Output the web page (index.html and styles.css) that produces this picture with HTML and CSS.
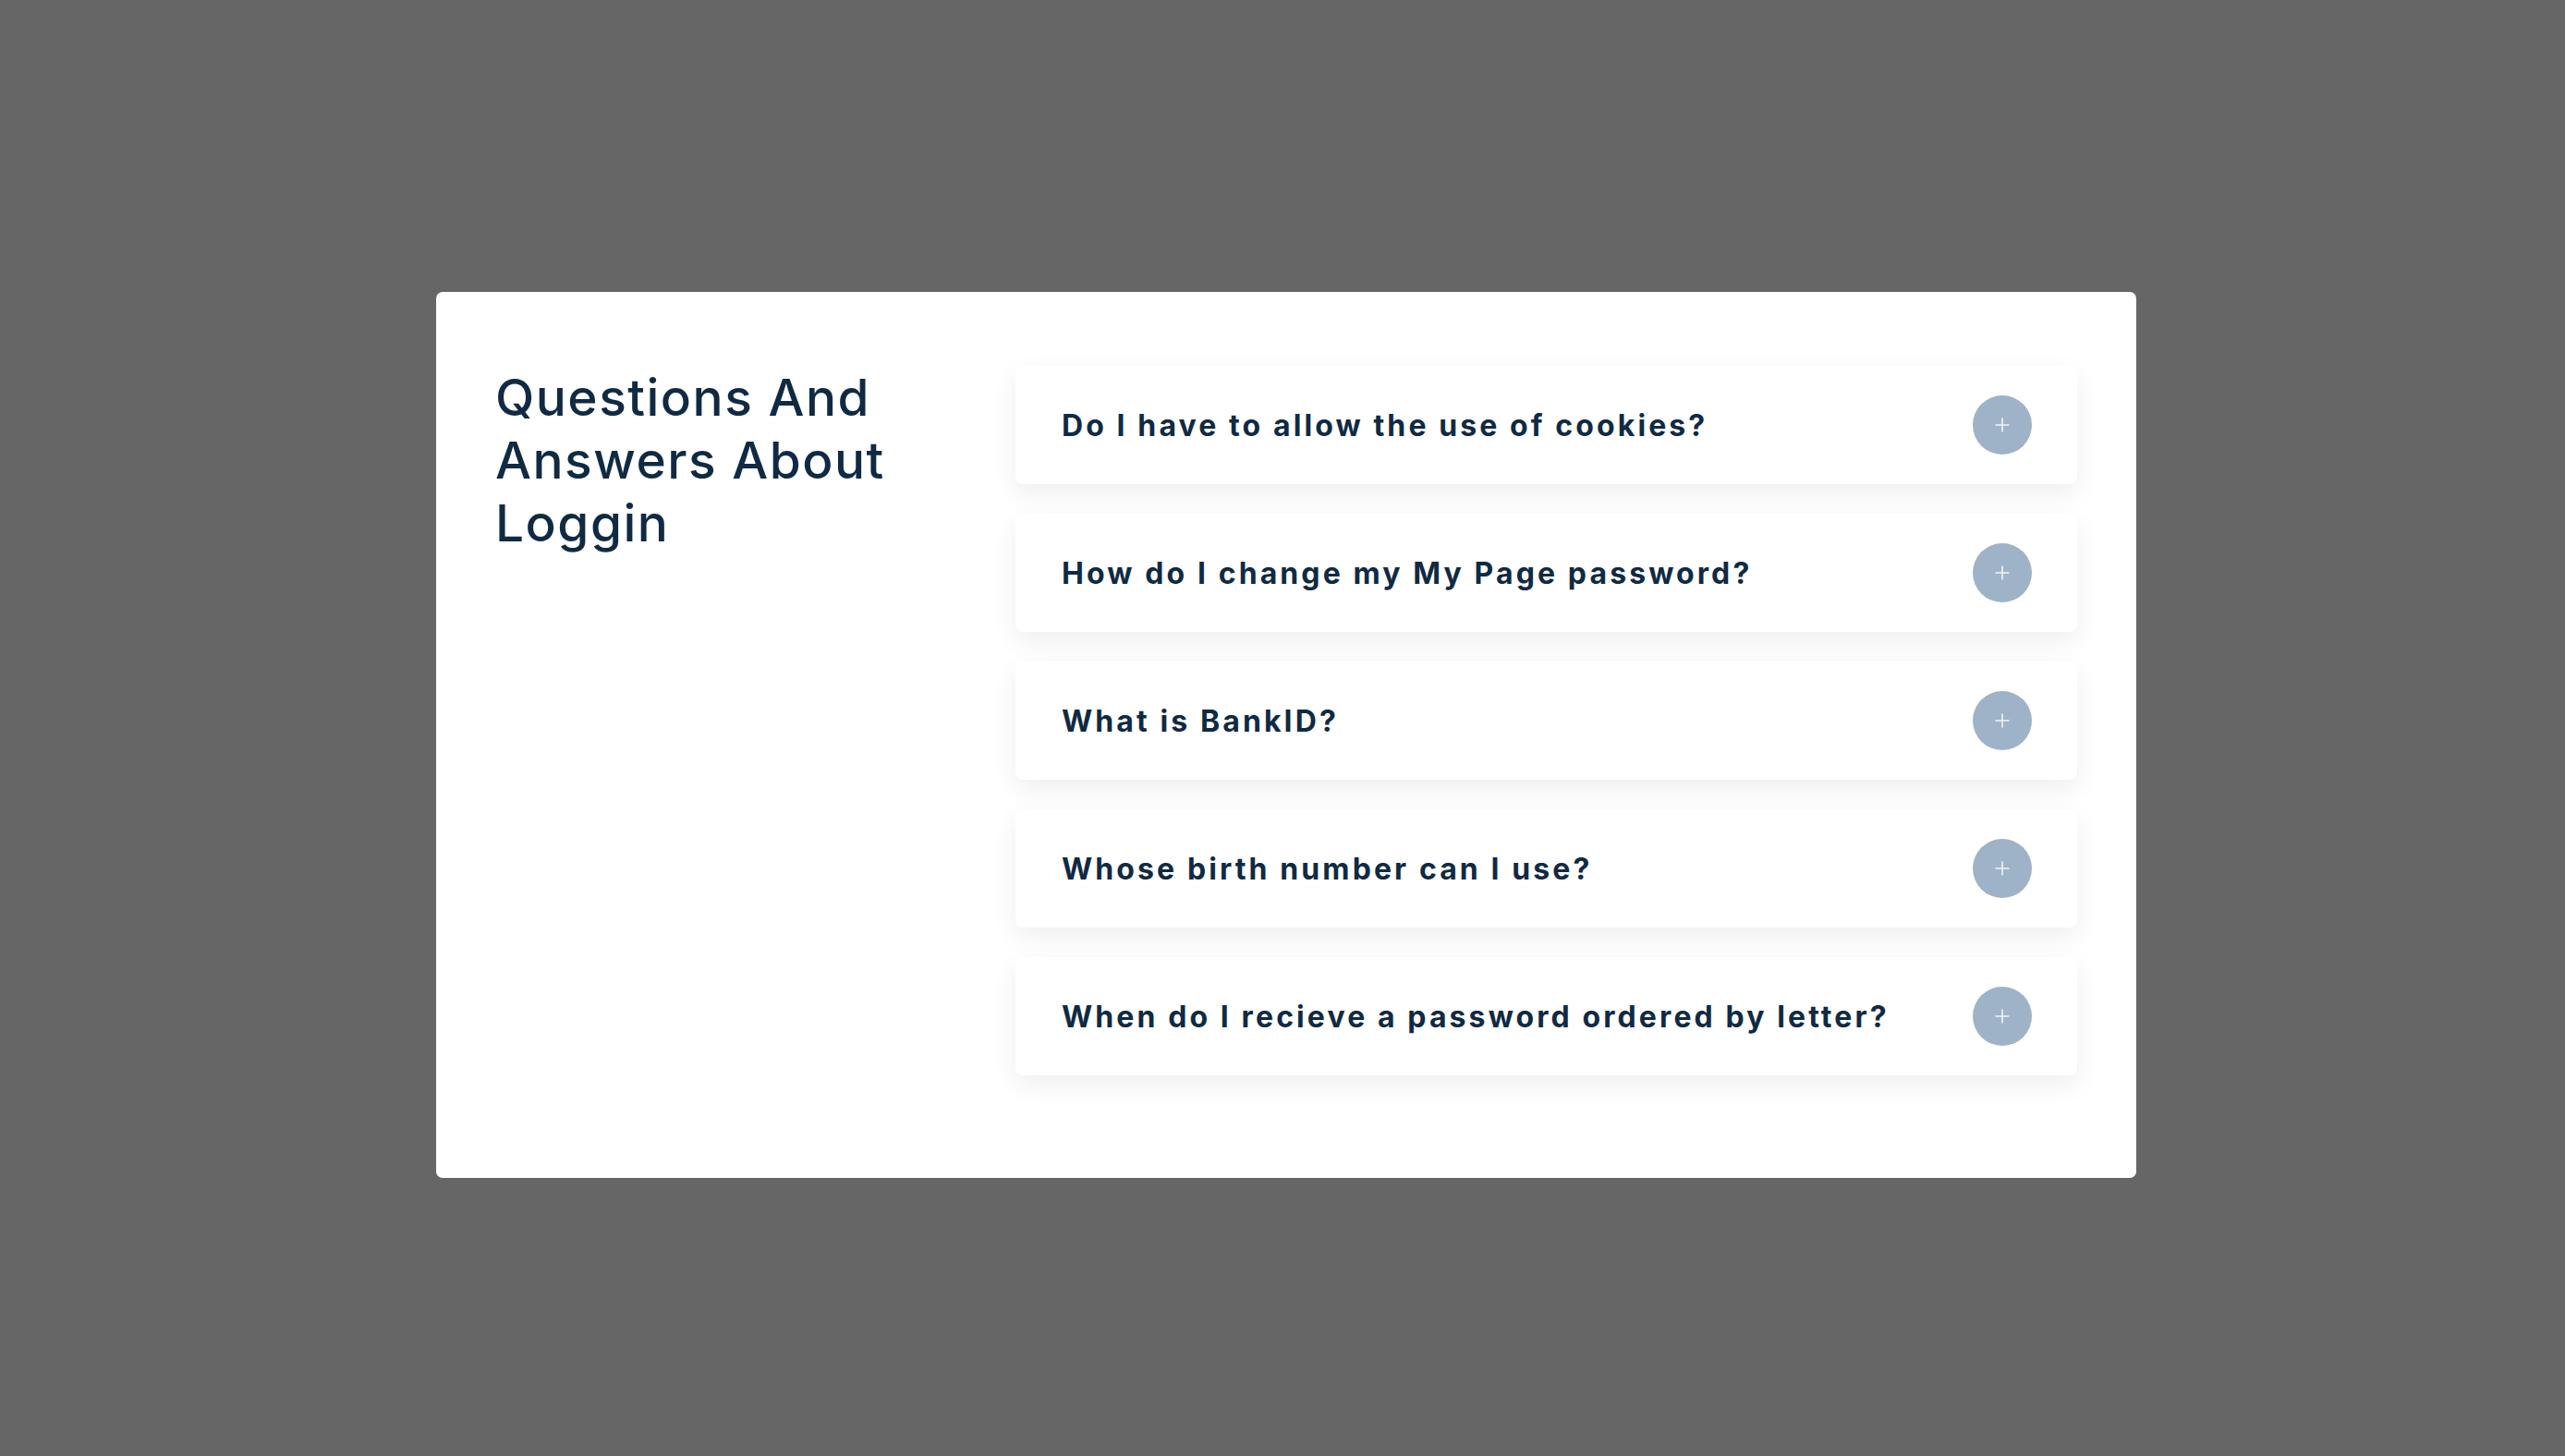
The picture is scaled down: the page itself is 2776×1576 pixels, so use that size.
FILE: index.html
```html
<!DOCTYPE html>
<html lang="en">
<head>
<meta charset="utf-8">
<title>Questions And Answers About Loggin</title>
<link rel="stylesheet" href="styles.css">
</head>
<body>
<div class="page">
  <section class="panel">
    <h1 class="title">Questions And Answers About Loggin</h1>
    <ul class="faq">
      <li class="item"><span class="q">Do I have to allow the use of cookies?</span><span class="toggle"><svg viewBox="0 0 16 16" width="16" height="16"><path d="M8 0.5V15.5M0.5 8H15.5" stroke="#ffffff" stroke-opacity="0.85" stroke-width="1.6" fill="none"/></svg></span></li>
      <li class="item"><span class="q">How do I change my My Page password?</span><span class="toggle"><svg viewBox="0 0 16 16" width="16" height="16"><path d="M8 0.5V15.5M0.5 8H15.5" stroke="#ffffff" stroke-opacity="0.85" stroke-width="1.6" fill="none"/></svg></span></li>
      <li class="item"><span class="q">What is BankID?</span><span class="toggle"><svg viewBox="0 0 16 16" width="16" height="16"><path d="M8 0.5V15.5M0.5 8H15.5" stroke="#ffffff" stroke-opacity="0.85" stroke-width="1.6" fill="none"/></svg></span></li>
      <li class="item"><span class="q">Whose birth number can I use?</span><span class="toggle"><svg viewBox="0 0 16 16" width="16" height="16"><path d="M8 0.5V15.5M0.5 8H15.5" stroke="#ffffff" stroke-opacity="0.85" stroke-width="1.6" fill="none"/></svg></span></li>
      <li class="item"><span class="q">When do I recieve a password ordered by letter?</span><span class="toggle"><svg viewBox="0 0 16 16" width="16" height="16"><path d="M8 0.5V15.5M0.5 8H15.5" stroke="#ffffff" stroke-opacity="0.85" stroke-width="1.6" fill="none"/></svg></span></li>
    </ul>
  </section>
</div>
</body>
</html>
```

FILE: styles.css
```css
html, body {
  margin: 0;
  padding: 0;
  background: #666666;
  font-family: Inter, "Noto Sans", "Liberation Sans", sans-serif;
}

.page {
  min-height: 1576px;
  box-sizing: border-box;
  padding: 316px 0 0 472px;
}

.panel {
  width: 1840px;
  height: 959px;
  box-sizing: border-box;
  background: #ffffff;
  border-radius: 7px;
  padding: 80px 64px 0 64px;
  display: flex;
  gap: 63px;
  align-items: flex-start;
}

.title {
  width: 500px;
  margin: 0;
  font-size: 55px;
  line-height: 68px;
  font-weight: 500;
  letter-spacing: 1.5px;
  color: #102a43;
}

.faq {
  list-style: none;
  margin: 0;
  padding: 0;
  width: 1149px;
  display: flex;
  flex-direction: column;
  gap: 32px;
}

.item {
  height: 128px;
  box-sizing: border-box;
  padding: 0 49px 0 50px;
  background: #ffffff;
  border-radius: 8px;
  box-shadow: 0 10px 28px rgba(0, 0, 0, 0.07);
  display: flex;
  align-items: center;
  justify-content: space-between;
}

.q {
  font-size: 32px;
  font-weight: 700;
  letter-spacing: 3.1px;
  color: #102a43;
}

.toggle {
  width: 64px;
  height: 64px;
  border-radius: 50%;
  background: #9fb3c8;
  display: flex;
  align-items: center;
  justify-content: center;
}
```
